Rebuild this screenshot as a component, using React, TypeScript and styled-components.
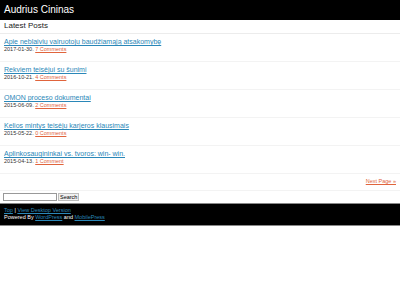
import React from 'react';
import styled, { createGlobalStyle } from 'styled-components';

const GlobalStyle = createGlobalStyle`
  html, body {
    margin: 0;
    padding: 0;
    background: #fff;
    font-family: "Liberation Sans", Arial, sans-serif;
  }
`;

const Header = styled.div`
  background: #000;
  color: #fff;
  height: 20px;
  padding: 0 4px;
  font-size: 10px;
  line-height: 20px;
`;

const SectionTitle = styled.div`
  font-size: 8px;
  line-height: 10px;
  color: #222;
  padding: 1px 4px 2px;
  border-bottom: 1px solid #ececec;
`;

const Post = styled.div`
  padding: 4px 4px 0;
  height: 23px;
  border-bottom: 1px solid #f3f3f3;
`;

const PostTitle = styled.a`
  display: block;
  font-size: 7px;
  line-height: 8px;
  color: #2a87b8;
  text-decoration: underline;
`;

const Meta = styled.div`
  font-size: 5.5px;
  line-height: 7px;
  color: #333;
`;

const Orange = styled.a`
  color: #e0643c;
  text-decoration: underline;
`;

const Pager = styled.div`
  text-align: right;
  font-size: 5.5px;
  line-height: 7px;
  padding: 4px 4px 5px;
  border-bottom: 1px solid #f3f3f3;
`;

const SearchRow = styled.form`
  display: flex;
  align-items: center;
  gap: 1px;
  padding: 2px 3px 2px;
`;

const SearchInput = styled.input`
  width: 52px;
  height: 6px;
  border: 1px solid #999;
  padding: 0;
  margin: 0;
  font-size: 5px;
`;

const SearchButton = styled.button`
  height: 8px;
  font-size: 5.5px;
  line-height: 6px;
  padding: 0 1px;
  margin: 0;
  border: 1px solid #bbb;
  background: #f0f0f0;
  color: #000;
  font-family: "Liberation Sans", Arial, sans-serif;
`;

const Footer = styled.div`
  background: #000;
  color: #fff;
  font-size: 5.5px;
  line-height: 7px;
  padding: 3px 4px 4px;
  border-top: 1px solid #888;
  border-bottom: 1px solid #888;
`;

const BlueLink = styled.a`
  color: #2a87b8;
  text-decoration: underline;
`;

const posts = [
  { title: 'Apie neblaivių vairuotojų baudžiamąją atsakomybę', date: '2017-01-30', comments: '7 Comments' },
  { title: 'Rekviem teisėjui su šunimi', date: '2016-10-21', comments: '4 Comments' },
  { title: 'OMON proceso dokumentai', date: '2015-06-09', comments: '2 Comments' },
  { title: 'Kelios mintys teisėjų karjeros klausimais', date: '2015-05-22', comments: '0 Comments' },
  { title: 'Aplinkosaugininkai vs. tvoros: win- win.', date: '2015-04-13', comments: '1 Comment' },
];

export default function App() {
  return (
    <>
      <GlobalStyle />
      <Header>Audrius Cininas</Header>
      <SectionTitle>Latest Posts</SectionTitle>
      {posts.map((p) => (
        <Post key={p.title}>
          <PostTitle href="#">{p.title}</PostTitle>
          <Meta>
            {p.date}. <Orange href="#">{p.comments}</Orange>
          </Meta>
        </Post>
      ))}
      <Pager>
        <Orange href="#">Next Page »</Orange>
      </Pager>
      <SearchRow onSubmit={(e) => e.preventDefault()}>
        <SearchInput type="text" />
        <SearchButton type="submit">Search</SearchButton>
      </SearchRow>
      <Footer>
        <div>
          <BlueLink href="#">Top</BlueLink> | <BlueLink href="#">View Desktop Version</BlueLink>
        </div>
        <div>
          Powered By <BlueLink href="#">WordPress</BlueLink> and <BlueLink href="#">MobilePress</BlueLink>
        </div>
      </Footer>
    </>
  );
}
